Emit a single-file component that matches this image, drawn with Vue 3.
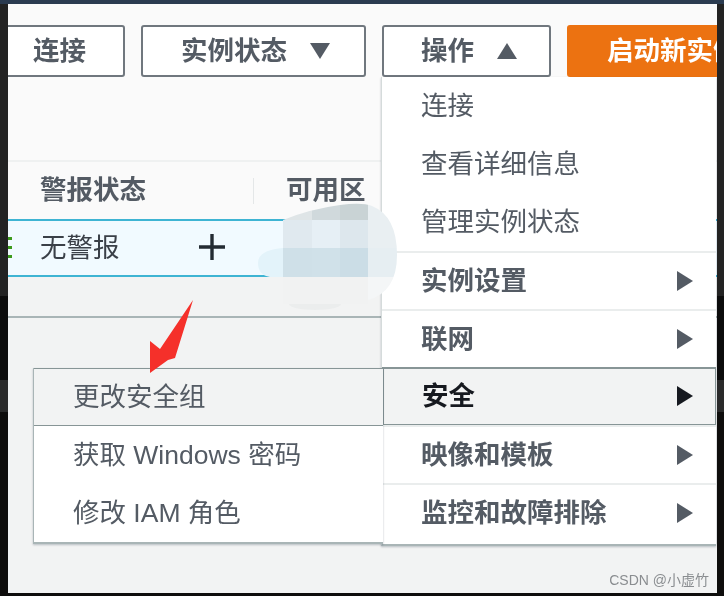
<script setup>
const menuTop = ['连接', '查看详细信息', '管理实例状态']
const menuGroups = [
  { name: '实例设置' },
  { name: '联网' },
  { name: '安全', active: true },
  { name: '映像和模板' },
  { name: '监控和故障排除' },
]
const subMenu = ['更改安全组', '获取 Windows 密码', '修改 IAM 角色']
// 打码区域的色块，坐标相对 svg viewBox
const mosaic = [
  { x: 250, y: 248, w: 33, h: 29, c: '#e3f3fa' },
  { x: 283, y: 200, w: 29, h: 20, c: '#dfe5e7' },
  { x: 312, y: 200, w: 28, h: 20, c: '#d0d9dc' },
  { x: 340, y: 200, w: 28, h: 20, c: '#c9d3d5' },
  { x: 283, y: 220, w: 29, h: 28, c: '#e0e9ef' },
  { x: 312, y: 220, w: 28, h: 28, c: '#e6eff5' },
  { x: 340, y: 220, w: 28, h: 28, c: '#dde7ed' },
  { x: 283, y: 248, w: 29, h: 29, c: '#cfe0e8' },
  { x: 312, y: 248, w: 28, h: 29, c: '#d0e1e9' },
  { x: 340, y: 248, w: 28, h: 29, c: '#cbdde6' },
  { x: 368, y: 200, w: 32, h: 48, c: '#e9eff2' },
  { x: 368, y: 248, w: 32, h: 29, c: '#e6eef2' },
  { x: 368, y: 277, w: 32, h: 30, c: '#f4f6f7' },
]
</script>

<template>
  <div class="frame">
    <div class="panel">
      <div class="toolbar">
        <button class="btn btn-connect"><span class="label">连接</span></button>
        <button class="btn btn-state"><span class="label">实例状态</span><span class="tri tri-down"></span></button>
        <button class="btn btn-action"><span class="label">操作</span><span class="tri tri-up"></span></button>
        <button class="btn btn-launch"><span class="label">启动新实例</span></button>
      </div>
      <div class="spacer"></div>
      <div class="table-head">
        <div class="th th-alarm"><span class="label-th">警报状态</span></div>
        <div class="th th-zone"><span class="label-th">可用区</span></div>
      </div>
      <div class="table-row">
        <div class="status-ticks"><i></i><i></i><i></i></div>
        <span class="alarm-text">无警报</span>
        <svg class="plus" width="28" height="28" viewBox="0 0 28 28">
          <path d="M14 1v26M1 14h26" stroke="#232b33" stroke-width="3.4" fill="none" />
        </svg>
      </div>
      <div class="table-foot"></div>

      <div class="menu">
        <div v-for="t in menuTop" :key="t" class="item">{{ t }}</div>
        <div
          v-for="g in menuGroups"
          :key="g.name"
          class="item group"
          :class="{ active: g.active }"
        >
          <span>{{ g.name }}</span>
          <span class="tri tri-right"></span>
        </div>
      </div>

      <div class="submenu">
        <div
          v-for="(s, i) in subMenu"
          :key="s"
          class="item"
          :class="{ 'sub-active': i == 0 }"
        >{{ s }}</div>
      </div>

      <svg class="blur" width="150" height="115" viewBox="250 200 150 115">
        <defs>
          <clipPath id="blob">
            <path d="M258 263 Q258 250 283 248 L283 220 Q310 209 340 205 Q362 202 372 206 Q397 216 397 255 Q397 292 368 300 L368 277 L270 277 Q258 275 258 263 Z" />
          </clipPath>
        </defs>
        <ellipse cx="315" cy="304" rx="26" ry="6" fill="#ebeded" />
        <rect x="283" y="277" width="85" height="27" fill="#f1f2f2" />
        <g clip-path="url(#blob)">
          <rect v-for="(m, i) in mosaic" :key="i" :x="m.x" :y="m.y" :width="m.w" :height="m.h" :fill="m.c" />
        </g>
      </svg>

      <svg class="arrow" width="50" height="76" viewBox="0 0 50 76">
        <path d="M46 0 L28 58 L21 60 L3 73 L3 41 L13 49 Z" fill="#f5302a" />
      </svg>

      <div class="mark">CSDN @小虚竹</div>
    </div>
  </div>
</template>

<style scoped>
.frame {
  width: 724px;
  height: 596px;
  background: linear-gradient(
    to bottom,
    #2b3b50 0,
    #2b3b50 4px,
    #232323 4px,
    #232323 296px,
    #0c0c0c 296px,
    #0c0c0c 380px,
    #2a2a2a 380px,
    #2a2a2a 412px,
    #0e0d0c 412px
  );
  padding: 4px 7px 3px 8px;
  box-sizing: border-box;
  overflow: hidden;
  font-family: "Liberation Sans", "Noto Sans CJK SC", sans-serif;
}

.panel {
  position: relative;
  height: 100%;
  background: #f2f3f3;
  overflow: hidden;
  display: flex;
  flex-direction: column;
  filter: blur(0.5px);
}

.toolbar {
  display: flex;
  align-items: flex-start;
  gap: 16px;
  height: 97px;
  padding-top: 21px;
  box-sizing: border-box;
  background: #fafafa;
  margin-left: -20px;
  flex-shrink: 0;
}

.btn {
  height: 52px;
  box-sizing: border-box;
  border: 2px solid #70777e;
  border-radius: 3px;
  background: #fff;
  color: #545b64;
  font-family: inherit;
  font-size: 26.5px;
  font-weight: 700;
  padding: 0;
  display: flex;
  align-items: center;
  flex-shrink: 0;
}

.label {
  padding-bottom: 5px;
}

.btn-connect {
  width: 137px;
  justify-content: center;
  padding-left: 6px;
}

.btn-state {
  width: 225px;
  padding-left: 38px;
}

.btn-action {
  width: 169px;
  padding-left: 37px;
}

.btn-launch {
  width: 200px;
  background: #ec7211;
  border-color: #ec7211;
  color: #fff;
  padding-left: 38px;
}

.tri {
  display: inline-block;
  width: 0;
  height: 0;
}

.tri-down {
  margin-left: 23px;
  border-left: 10px solid transparent;
  border-right: 10px solid transparent;
  border-top: 16px solid #545b64;
}

.tri-up {
  margin-left: 23px;
  border-left: 10px solid transparent;
  border-right: 10px solid transparent;
  border-bottom: 16px solid #545b64;
}

.tri-right {
  border-top: 10px solid transparent;
  border-bottom: 10px solid transparent;
  border-left: 16px solid #545b64;
  margin-top: 5px;
}

.spacer {
  height: 59px;
  background: #fafafa;
  flex-shrink: 0;
}

.table-head {
  height: 59px;
  box-sizing: border-box;
  border-top: 2px solid #eff1f1;
  background: #fafafa;
  display: flex;
  align-items: center;
  flex-shrink: 0;
}

.th {
  font-size: 26.5px;
  font-weight: 700;
  color: #545b64;
  height: 26px;
  line-height: 26px;
}

.label-th {
  position: relative;
  top: -1px;
}

.th-alarm {
  width: 246px;
  padding-left: 32px;
  box-sizing: border-box;
  border-right: 1px solid #e4e7e8;
}

.th-zone {
  padding-left: 32px;
}

.table-row {
  height: 58px;
  box-sizing: border-box;
  border-top: 2px solid #3eb4d3;
  border-bottom: 2px solid #3eb4d3;
  background: #f1faff;
  display: flex;
  align-items: center;
  flex-shrink: 0;
  font-size: 26.5px;
  padding-bottom: 2px;
}

.status-ticks {
  width: 4px;
  margin-right: 28px;
  display: flex;
  flex-direction: column;
  gap: 6px;
  flex-shrink: 0;
}

.status-ticks i {
  display: block;
  height: 3px;
  background: #3c9a1c;
}

.alarm-text {
  color: #3a4048;
  width: 158px;
  flex-shrink: 0;
  padding-bottom: 3px;
}

.plus {
  flex-shrink: 0;
}

.table-foot {
  height: 41px;
  box-sizing: border-box;
  border-bottom: 2px solid #a9b5b6;
  background: #f2f3f3;
  flex-shrink: 0;
}

.blur {
  position: absolute;
  left: 242px;
  top: 196px;
}

.menu {
  position: absolute;
  left: 373px;
  top: 73px;
  width: 335px;
  padding-bottom: 3px;
  background: #fff;
  border-left: 1px solid #d5dbdb;
  border-bottom: 2px solid #a9b5b6;
  box-shadow: 0 1px 2px rgba(0, 22, 43, 0.25);
  box-sizing: border-box;
}

.item {
  height: 58px;
  box-sizing: border-box;
  padding-left: 39px;
  padding-bottom: 6px;
  display: flex;
  align-items: center;
  font-size: 26.5px;
  color: #545b64;
}

.group {
  justify-content: space-between;
  padding-right: 23px;
  font-weight: 700;
  border-top: 2px solid #eaeded;
}

.group.active {
  border: 1px solid #879596;
  border-top-width: 2px;
  border-left-width: 2px;
  background: #f2f3f3;
  color: #16191f;
  padding-left: 38px;
  padding-right: 22px;
}

.group.active .tri-right {
  border-left-color: #16191f;
}

.submenu {
  position: absolute;
  left: 25px;
  top: 364px;
  width: 350px;
  background: #fff;
  border-left: 1px solid #a9b5b6;
  border-bottom: 2px solid #a9b5b6;
  box-shadow: 0 1px 2px rgba(0, 22, 43, 0.25);
  box-sizing: border-box;
}

.sub-active {
  background: #f2f3f3;
  border-top: 1px solid #879596;
  border-bottom: 1px solid #879596;
}

.arrow {
  position: absolute;
  left: 139px;
  top: 296px;
}

.mark {
  position: absolute;
  right: 8px;
  bottom: 4px;
  font-size: 14px;
  color: #8a8d90;
}
</style>

<style>
body {
  margin: 0;
}
</style>
